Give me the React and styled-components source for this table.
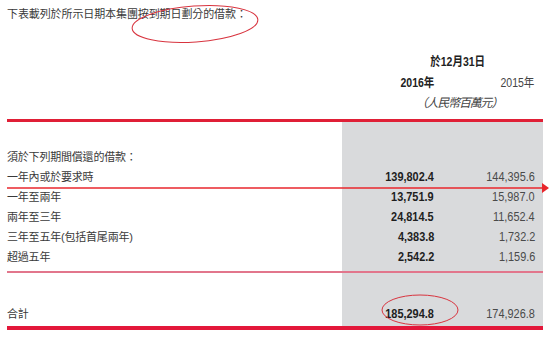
import React from 'react';
import styled, { createGlobalStyle } from 'styled-components';

const GlobalStyle = createGlobalStyle`
  html, body {
    margin: 0;
    padding: 0;
    background: #fff;
  }
`;

const CJK = `"Liberation Sans", "Noto Sans CJK TC", sans-serif`;

const Page = styled.div`
  position: relative;
  width: 556px;
  height: 341px;
  overflow: hidden;
  background: #fff;
  font-family: ${CJK};
  color: #3a3a3a;
`;

const Intro = styled.p`
  margin: 0;
  padding: 6px 0 0 7px;
  font-size: 11px;
  line-height: 16px;
  letter-spacing: -0.1px;
`;

const Table = styled.div`
  width: 536px;
  margin: 0 0 0 7px;
`;

const Head = styled.div`
  display: grid;
  grid-template-columns: 335px 100px 101px;
  padding-top: 31px;
  padding-bottom: 7px;
  border-bottom: 3px solid #e01f36;
`;

const Narrow = styled.span`
  display: inline-block;
  transform: scaleX(0.84);
  transform-origin: ${(p) => p.$origin || 'right'} center;
`;

const DateCap = styled.div`
  grid-column: 2 / 4;
  padding-left: 30px;
  text-align: center;
  font-size: 12.5px;
  font-weight: 700;
  line-height: 18px;
  color: #222;
`;

const YearCell = styled.div`
  grid-column: ${(p) => p.$col};
  text-align: right;
  padding-right: ${(p) => (p.$col === 2 ? 8 : 9)}px;
  padding-top: 3px;
  font-size: 12.5px;
  line-height: 18px;
  font-weight: ${(p) => (p.$bold ? 700 : 400)};
  color: ${(p) => (p.$bold ? '#222' : '#444')};
`;

const Unit = styled.div`
  grid-column: 2 / 4;
  padding-left: 33px;
  padding-top: 3px;
  text-align: center;
  font-size: 12px;
  line-height: 17px;
  font-style: italic;
  letter-spacing: -1.2px;
  color: #444;
`;

const Body = styled.div`
  background: linear-gradient(to right, transparent 335px, #d9dadc 335px);
`;

const Section = styled.div`
  padding: ${(p) => p.$pad};
  border-bottom: ${(p) => p.$line};
`;

const Row = styled.div`
  display: grid;
  grid-template-columns: 335px 100px 101px;
  height: 20px;
  align-items: center;
`;

const Label = styled.div`
  font-size: 11px;
  letter-spacing: -0.2px;
  color: #3a3a3a;
`;

const Num = styled.div`
  text-align: right;
  padding-right: 8px;
  font-size: 13px;
  font-weight: ${(p) => (p.$bold ? 700 : 400)};
  color: ${(p) => (p.$bold ? '#1e1e1e' : '#4a4a4a')};
`;

const Overlay = styled.svg`
  position: absolute;
  left: 0;
  top: 0;
  pointer-events: none;
`;

const rows = [
  ['一年內或於要求時', '139,802.4', '144,395.6'],
  ['一年至兩年', '13,751.9', '15,987.0'],
  ['兩年至三年', '24,814.5', '11,652.4'],
  ['三年至五年(包括首尾兩年)', '4,383.8', '1,732.2'],
  ['超過五年', '2,542.2', '1,159.6'],
];

export default function App() {
  return (
    <Page>
      <GlobalStyle />
      <Intro>下表載列於所示日期本集團按到期日劃分的借款：</Intro>
      <Table>
        <Head>
          <DateCap><Narrow $origin="center">於12月31日</Narrow></DateCap>
          <YearCell $col={2} $bold><Narrow>2016年</Narrow></YearCell>
          <YearCell $col={3}><Narrow>2015年</Narrow></YearCell>
          <Unit>（人民幣百萬元）</Unit>
        </Head>
        <Body>
          <Section $pad="24px 0 5px" $line="2px solid #e2768c">
            <Row>
              <Label>須於下列期間償還的借款：</Label>
            </Row>
            {rows.map(([label, a, b]) => (
              <Row key={label}>
                <Label>{label}</Label>
                <Num $bold><Narrow>{a}</Narrow></Num>
                <Num><Narrow>{b}</Narrow></Num>
              </Row>
            ))}
          </Section>
          <Section $pad="30px 0 3px" $line="4px solid #e3173a">
            <Row>
              <Label>合計</Label>
              <Num $bold><Narrow>185,294.8</Narrow></Num>
              <Num><Narrow>174,926.8</Narrow></Num>
            </Row>
          </Section>
        </Body>
      </Table>
      <Overlay width="556" height="341" viewBox="0 0 556 341">
        <ellipse cx="195" cy="24" rx="63" ry="18" transform="rotate(-4 195 24)" fill="none" stroke="#d8343f" strokeWidth="1" />
        <line x1="7" y1="188" x2="543" y2="188" stroke="#e8262c" strokeWidth="1.5" />
        <polygon points="542,183 549,188 542,193" fill="#e8262c" />
        <ellipse cx="420" cy="310" rx="38" ry="15" fill="none" stroke="#d8343f" strokeWidth="1" />
      </Overlay>
    </Page>
  );
}
